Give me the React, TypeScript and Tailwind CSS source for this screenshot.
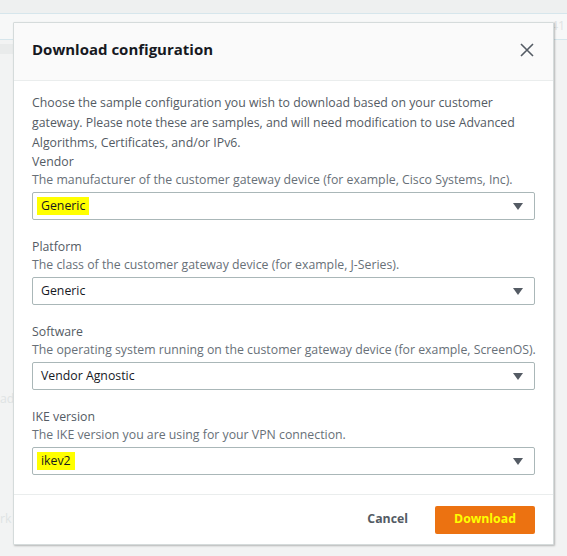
import React from 'react';

const groups = [
  { label: 'Vendor', desc: 'The manufacturer of the customer gateway device (for example, Cisco Systems, Inc).', value: 'Generic', mark: true },
  { label: 'Platform', desc: 'The class of the customer gateway device (for example, J-Series).', value: 'Generic', mark: false },
  { label: 'Software', desc: 'The operating system running on the customer gateway device (for example, ScreenOS).', value: 'Vendor Agnostic', mark: false },
  { label: 'IKE version', desc: 'The IKE version you are using for your VPN connection.', value: 'ikev2', mark: true },
];

function SelectBox({ value, mark }: { value: string; mark: boolean }) {
  return (
    <div className="mt-[3px] h-[28px] flex items-center justify-between border border-[#aab7b8] rounded-[2px] bg-white pl-[4px] pr-[11px]">
      <span className={mark ? 'bg-[#ffff00] px-[4px] leading-[18px] text-[#16191f]' : 'px-[4px] text-[#16191f]'}>{value}</span>
      <svg width="10" height="7" viewBox="0 0 10 7">
        <path d="M0 0 H10 L5 7 Z" fill="#545b64" />
      </svg>
    </div>
  );
}

export default function App() {
  return (
    <div className="relative w-[567px] h-[556px] overflow-hidden bg-[#f2f3f3] text-[12.3px]" style={{ fontFamily: '"Open Sans", "Noto Sans", sans-serif' }}>
      {/* background page, faint */}
      <div className="h-[14px] bg-[#eef0f0] border-b border-[#d6e6ec]" />
      <div className="h-[26px] bg-[#f7f8f8] border-b border-[#d6e6ec] flex justify-end pr-[2px] items-center text-[#dfe3e4]">41</div>
      <div className="h-[10px] bg-[#e9ebeb] w-[14px] mt-[4px]" />
      <div className="absolute left-0 top-[390px] text-[#dfe3e4]">ad</div>
      <div className="absolute left-0 top-[510px] text-[#dfe3e4]">rk</div>

      {/* modal */}
      <div className="absolute left-[13px] top-[22px] w-[541px] bg-white border border-[#d5dbdb] shadow-[1px_1px_2px_rgba(0,0,0,0.25)] rounded-[1px]">
        <div className="h-[58px] bg-[#fafafa] border-b border-[#eaeded] flex items-center justify-between pl-[18px] pr-[18px] pb-[4px]">
          <h2 className="text-[15px] font-bold text-[#16191f]">Download configuration</h2>
          <svg width="14" height="14" viewBox="0 0 14 14" className="mr-[1px]">
            <path d="M1 1 L13 13 M13 1 L1 13" stroke="#545b64" strokeWidth="1.6" />
          </svg>
        </div>
        <div className="px-[18px] pt-[12px] pb-[19px] text-[#545b64]">
          <p className="leading-[20px] text-[#545b64]">
            Choose the sample configuration you wish to download based on your customer gateway. Please note these are samples, and will need modification to use Advanced Algorithms, Certificates, and/or IPv6.
          </p>
          <div className="flex flex-col gap-[18px]">
            {groups.map((g) => (
              <div key={g.label}>
                <div className="leading-[18px] text-[#545b64]">{g.label}</div>
                <div className="leading-[18px] text-[#687078] whitespace-nowrap">{g.desc}</div>
                <SelectBox value={g.value} mark={g.mark} />
              </div>
            ))}
          </div>
        </div>
        <div className="border-t border-[#eaeded] h-[50px] flex items-center justify-end gap-[27px] px-[18px]">
          <button className="font-bold text-[#545b64]">Cancel</button>
          <button className="w-[100px] h-[28px] rounded-[2px] bg-[#ec7211] font-bold text-[#ffff00]">Download</button>
        </div>
      </div>
    </div>
  );
}
